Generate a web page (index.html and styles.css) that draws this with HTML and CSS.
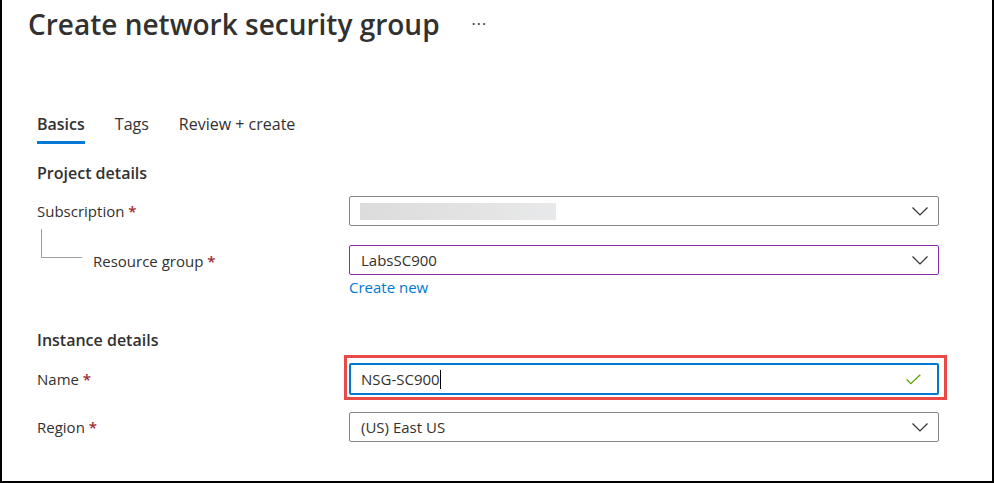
FILE: index.html
```html
<!DOCTYPE html>
<html lang="en">
<head>
<meta charset="utf-8">
<title>Create network security group</title>
<link rel="stylesheet" href="styles.css">
</head>
<body>
<div class="frame">
  <header class="page-header">
    <h1 class="title">Create network security group</h1>
    <span class="more">&middot;&middot;&middot;</span>
  </header>

  <nav class="tabs">
    <span class="tab active">Basics</span>
    <span class="tab">Tags</span>
    <span class="tab">Review + create</span>
  </nav>

  <section class="section project">
    <h2 class="section-title">Project details</h2>
    <div class="row row-sub">
      <label class="label">Subscription <span class="req">*</span></label>
      <div class="field">
        <div class="select">
          <span class="redacted"></span>
          <svg class="chev" width="16" height="9" viewBox="0 0 16 9"><path d="M0.5 0.5 L8 8 L15.5 0.5" fill="none" stroke="#323130" stroke-width="1.2"/></svg>
        </div>
      </div>
    </div>
    <div class="row row-rg">
      <div class="label nested">
        <span class="tree"></span>
        <label>Resource group <span class="req">*</span></label>
      </div>
      <div class="field">
        <div class="select purple">
          <span class="value">LabsSC900</span>
          <svg class="chev" width="16" height="9" viewBox="0 0 16 9"><path d="M0.5 0.5 L8 8 L15.5 0.5" fill="none" stroke="#323130" stroke-width="1.2"/></svg>
        </div>
        <a class="link">Create new</a>
      </div>
    </div>
  </section>

  <section class="section instance">
    <h2 class="section-title">Instance details</h2>
    <div class="row row-name">
      <label class="label">Name <span class="req">*</span></label>
      <div class="field">
        <div class="highlight">
          <div class="input">
            <span class="value">NSG-SC900</span><span class="caret"></span>
            <svg class="check" width="15" height="11" viewBox="0 0 15 11"><path d="M0.7 5.5 L4.8 9.6 L14.3 0.7" fill="none" stroke="#57a300" stroke-width="1.3"/></svg>
          </div>
        </div>
      </div>
    </div>
    <div class="row row-region">
      <label class="label">Region <span class="req">*</span></label>
      <div class="field">
        <div class="select">
          <span class="value">(US) East US</span>
          <svg class="chev" width="16" height="9" viewBox="0 0 16 9"><path d="M0.5 0.5 L8 8 L15.5 0.5" fill="none" stroke="#323130" stroke-width="1.2"/></svg>
        </div>
      </div>
    </div>
  </section>
</div>
</body>
</html>
```

FILE: styles.css
```css
* { box-sizing: border-box; }
html, body { margin: 0; padding: 0; background: #fff; }
body {
  font-family: "Open Sans", "Noto Sans", "Liberation Sans", sans-serif;
  color: #323130;
  width: 994px;
  height: 483px;
  overflow: hidden;
}
.frame {
  width: 994px;
  height: 483px;
  border-left: 2px solid #000;
  border-right: 2px solid #000;
  border-bottom: 2px solid #000;
  padding-left: 35px;
}
.page-header {
  display: flex;
  align-items: center;
  height: 48px;
  margin-left: -9px;
}
.title {
  margin: 0;
  font-size: 28px;
  font-weight: 600;
  line-height: 36px;
  color: #323130;
}
.more {
  margin-left: 32px;
  font-size: 16px;
  letter-spacing: 1px;
  color: #323130;
}
.tabs {
  display: flex;
  gap: 30px;
  margin-top: 61px;
  height: 35px;
}
.tab {
  font-size: 16px;
  line-height: 30px;
  height: 35px;
  color: #323130;
}
.tab.active {
  font-weight: 600;
  border-bottom: 3px solid #0078d4;
}
.section-title {
  margin: 0;
  font-size: 16px;
  font-weight: 600;
  line-height: 22px;
}
.project .section-title { margin-top: 18px; }
.row {
  display: grid;
  grid-template-columns: 312px 590px;
}
.label {
  font-size: 15px;
  line-height: 30px;
}
.req { color: #a4262c; font-weight: 600; }
.row-sub { margin-top: 12px; }
.row-rg { margin-top: 19px; }
.nested {
  display: flex;
  align-items: flex-start;
  position: relative;
  height: 30px;
}
.tree {
  width: 41px;
  height: 29px;
  margin-top: -16px;
  margin-left: 4px;
  border-left: 1px solid #a19f9d;
  border-bottom: 1px solid #a19f9d;
  margin-right: 11px;
}
.nested label { padding-top: 1px; }
.select, .input {
  display: flex;
  align-items: center;
  height: 30px;
  border: 1px solid #8a8886;
  border-radius: 2px;
  padding: 0 11px;
  font-size: 15px;
}
.select.purple { border-color: #8a2da5; }
.value { flex: 1; line-height: 28px; }
.chev { margin-left: auto; flex: none; margin-right: -1px; }
.redacted {
  width: 196px;
  height: 17px;
  margin-left: -1px;
  background: linear-gradient(90deg, #dcdcdc 0%, #e2e2e2 50%, #e8e9ea 100%);
}
.link {
  display: block;
  font-size: 15px;
  color: #0078d4;
  line-height: 26px;
  margin-top: -1px;
}
.instance .section-title { margin-top: 29px; }
.row-name { margin-top: 4px; }
.highlight {
  margin: 0 -8px 0 -5px;
  border: 3px solid #e84b47;
  padding: 5px 5px 2px 2px;
}
.input {
  height: 32px;
  border: 2px solid #0078d4;
  padding: 0 10px;
}
.input .value { flex: none; }
.caret {
  width: 1px;
  height: 19px;
  background: #000;
  margin-left: 0;
}
.check { margin-left: auto; margin-right: 6px; }
.row-name .label { padding-top: 9px; }
.row-region { margin-top: 12px; }
```
